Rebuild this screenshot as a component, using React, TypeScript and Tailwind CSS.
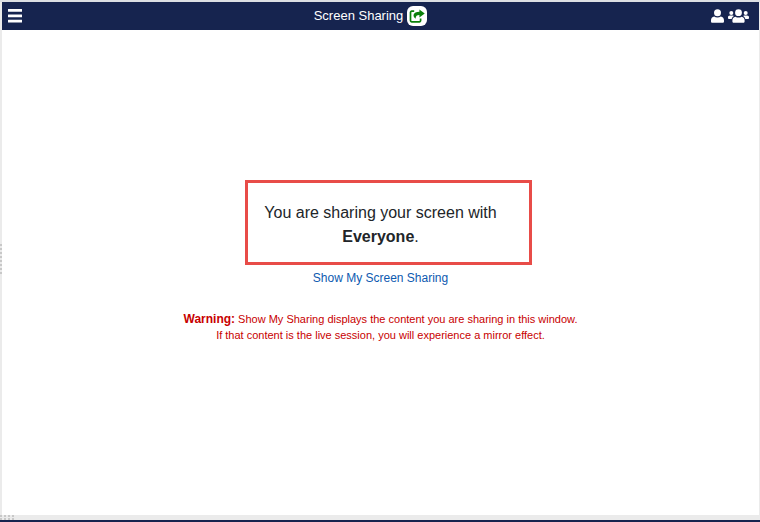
import React from "react";

const FONT = "font-['Liberation_Sans',Arial,sans-serif]";

function MenuIcon() {
  return (
    <svg width="14" height="14" viewBox="0 0 14 14" fill="currentColor" aria-hidden="true">
      <rect x="0" y="0" width="14" height="2.8" rx="0.3" />
      <rect x="0" y="5.4" width="14" height="2.8" rx="0.3" />
      <rect x="0" y="10.8" width="14" height="2.8" rx="0.3" />
    </svg>
  );
}

function ShareIcon() {
  return (
    <svg width="16" height="14" viewBox="0 0 16 14" aria-hidden="true">
      <path
        d="M5.2 2.2H2.7A1.2 1.2 0 0 0 1.5 3.4V11.6A1.2 1.2 0 0 0 2.7 12.8H10.4A1.2 1.2 0 0 0 11.6 11.6V9.6"
        fill="none"
        stroke="currentColor"
        strokeWidth="1.7"
      />
      <path
        d="M10.4 0.4L15.7 4.4L10.4 8.4V6C7.8 6 6.7 7 6.6 9.7C4.9 8.6 4.3 7.2 4.6 5.8C5.1 3.5 7.2 2.7 10.4 2.7Z"
        fill="currentColor"
      />
    </svg>
  );
}

function UserIcon() {
  return (
    <svg width="13" height="14" viewBox="0 0 13 14" fill="currentColor" aria-hidden="true">
      <circle cx="6.5" cy="3.7" r="3.5" />
      <path d="M3.2 7.6C4.1 8.3 5.2 8.6 6.5 8.6S8.9 8.3 9.8 7.6C11.9 8 13 9.4 13 11.5V12.4C13 13.3 12.4 13.8 11.6 13.8H1.4C0.6 13.8 0 13.3 0 12.4V11.5C0 9.4 1.1 8 3.2 7.6Z" />
    </svg>
  );
}

function UsersIcon() {
  return (
    <svg width="21" height="14" viewBox="0 0 21 14" fill="currentColor" aria-hidden="true">
      <circle cx="10.5" cy="3.7" r="3.4" />
      <path d="M7.5 7.8C8.4 8.4 9.4 8.6 10.5 8.6S12.6 8.4 13.5 7.8C15.6 8.1 16.6 9.4 16.6 11.4V12.4C16.6 13.3 16 13.8 15.2 13.8H5.8C5 13.8 4.4 13.3 4.4 12.4V11.4C4.4 9.4 5.4 8.1 7.5 7.8Z" />
      <circle cx="3.3" cy="4" r="2" />
      <circle cx="17.7" cy="4" r="2" />
      <path d="M1.9 6.6H4.7C5.2 6.6 5.6 6.8 6 7.1C4.7 7.8 4 8.7 3.7 9.9H0.9C0.3 9.9 0 9.5 0 9V8.5C0 7.3 0.8 6.6 1.9 6.6Z" />
      <path d="M19.1 6.6H16.3C15.8 6.6 15.4 6.8 15 7.1C16.3 7.8 17 8.7 17.3 9.9H20.1C20.7 9.9 21 9.5 21 9V8.5C21 7.3 20.2 6.6 19.1 6.6Z" />
    </svg>
  );
}

// Dotted grip on the bottom splitter
function GripDots() {
  return (
    <svg width="15" height="5" viewBox="0 0 15 5" aria-hidden="true">
      {[0, 4, 8, 12].map((x) => (
        <g key={x} fill="#c8c8c8">
          <rect x={x} y="0" width="2" height="2" />
          <rect x={x} y="3" width="2" height="2" />
        </g>
      ))}
    </svg>
  );
}

function SideGrip() {
  return (
    <svg width="2" height="30" viewBox="0 0 2 30" aria-hidden="true">
      {[0, 4, 8, 12, 16, 20, 24, 28].map((y) => (
        <rect key={y} x="0" y={y} width="2" height="2" fill="#c8c8c8" />
      ))}
    </svg>
  );
}

function Header() {
  return (
    <header className="flex h-7 items-center justify-between bg-[#16244f] pr-2.5 pl-1.5 text-white">
      <button type="button" aria-label="Menu" className="pr-2">
        <MenuIcon />
      </button>
      <h1 className="flex items-center gap-1 text-[13px]">
        Screen Sharing
        <span className="grid h-5 w-5 place-items-center rounded-md bg-white text-[#0a800a]">
          <ShareIcon />
        </span>
      </h1>
      <div className="flex items-center gap-1">
        <button type="button" aria-label="Share with one person">
          <UserIcon />
        </button>
        <button type="button" aria-label="Share with everyone">
          <UsersIcon />
        </button>
      </div>
    </header>
  );
}

export default function App() {
  return (
    <div className={`flex min-h-screen flex-col bg-white ${FONT}`}>
      <div className="h-[2px] bg-[#dcdfe3]" />
      <div className="flex flex-1">
        <div className="flex w-[2px] items-center bg-[#ebebeb]">
          <SideGrip />
        </div>
        <div className="flex flex-1 flex-col border-r border-[#ebebeb]">
          <Header />
          <main className="flex flex-1 flex-col items-center justify-center pb-[22px] text-center">
            <div className="ml-4 border-3 border-[#e84c48] pt-[18px] pr-8 pb-[13px] pl-4">
              <p className="text-base text-[#212529]">
                You are sharing your screen with
                <br />
                <strong>Everyone</strong>.
              </p>
            </div>
            <button type="button" className="mt-1 text-xs leading-[18px] text-[#0d5ab0]">
              Show My Screen Sharing
            </button>
            <p className="mt-6 text-[11px] leading-4 text-[#c80000]">
              <strong className="text-xs">Warning:</strong> Show My Sharing displays the content you are sharing in this window.
              <br />
              If that content is the live session, you will experience a mirror effect.
            </p>
          </main>
        </div>
      </div>
      <div className="flex h-[5px] items-center bg-[#ebebeb]">
        <GripDots />
      </div>
      <div className="h-[2px] bg-[#16244f]" />
    </div>
  );
}
